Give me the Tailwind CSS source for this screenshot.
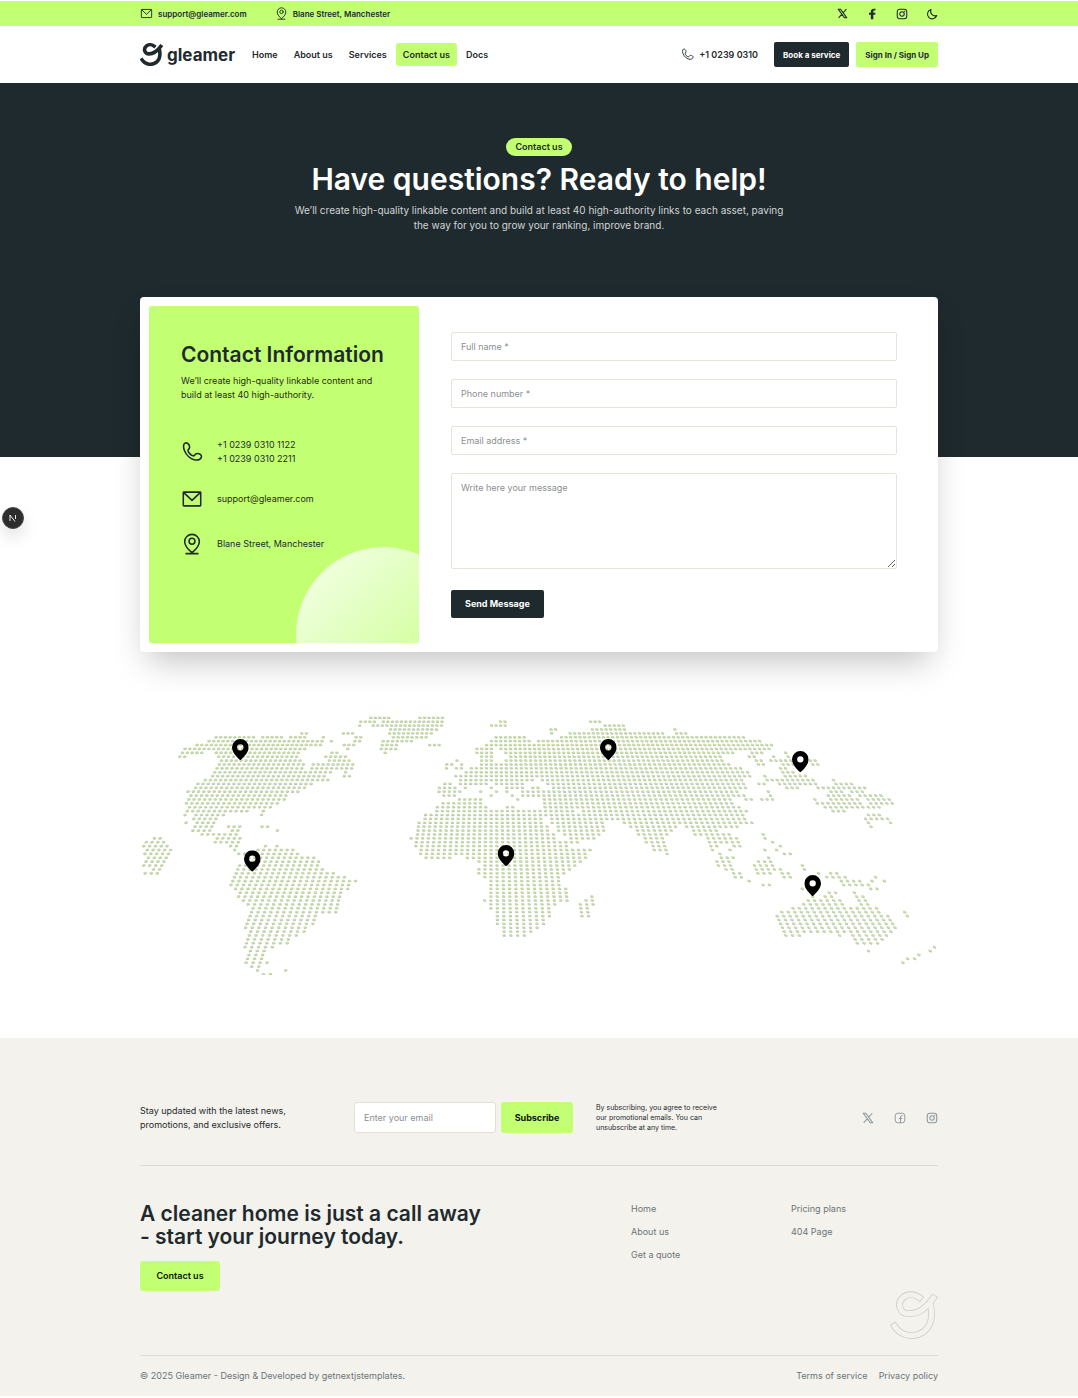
<!DOCTYPE html>
<html lang="en">
<head>
<meta charset="utf-8">
<meta name="viewport" content="width=device-width, initial-scale=1">
<title>Contact us - Gleamer</title>
<script src="https://cdn.jsdelivr.net/npm/@tailwindcss/browser@4"></script>
</head>
<body class="bg-white pt-px font-['Inter',sans-serif] text-[9px] text-[#1f2a2e] antialiased">

<svg class="hidden" aria-hidden="true">
  <symbol id="mail" viewBox="0 0 24 24"><g fill="none" stroke="currentColor" stroke-width="1.7" stroke-linejoin="round"><rect x="2.500" y="4.500" width="19" height="15" rx=".6"/><path d="M3 5l9 8.500L21 5"/></g></symbol>
  <symbol id="place" viewBox="0 0 24 24"><g fill="none" stroke="currentColor" stroke-width="1.7" stroke-linecap="round" stroke-linejoin="round"><path d="M12 21.500c-3-2.500-8-7.500-8-12A8 8 0 0 1 20 9.500c0 4.500-5 9.500-8 12zM5.500 22.500h13"/><circle cx="12" cy="9" r="3.200"/></g></symbol>
  <symbol id="phone" viewBox="0 0 24 24"><path fill="none" stroke="currentColor" stroke-width="1.7" stroke-linejoin="round" d="M3.200 3.600C3.800 2.200 5.600 1.600 7 2.400c1.700 1 2.500 3.300 2.300 4.900-.2 1.500-1.900 1.900-1.600 3.400.4 2 3.300 5.100 5.400 5.500 1.500.3 1.900-1.500 3.500-2.300 1.600-.6 4.500.2 5.400 1.700.7 1.600-.4 3.700-2 4.600-3 1.400-8 .3-11.600-3C4.300 13.700 1.800 7.200 3.200 3.600z"/></symbol>
  <symbol id="x" viewBox="0 0 24 24"><path fill="none" stroke="currentColor" stroke-width="2.200" stroke-linejoin="round" d="M2.500 2.500h5L21.500 21.500h-5zM20.500 2.500l-7.800 8.500M10.800 13.200L3.500 21.500"/></symbol>
  <symbol id="fb" viewBox="0 0 24 24"><path fill="currentColor" d="M14.600 22.500v-9h3.700l.7-4h-4.400V7.200c0-1.200.6-2 2-2h2.200V1.700C17.700 1.600 16.500 1.400 15.400 1.400c-3.300 0-5.700 1.900-5.700 5.500v2.600H6v4h3.700v9z"/></symbol>
  <symbol id="fbbox" viewBox="0 0 24 24"><g fill="none" stroke="currentColor" stroke-width="1.900"><rect x="2.500" y="2.500" width="19" height="19" rx="5"/><path d="M17 7.500h-1.500c-1.600 0-2.500.9-2.500 2.500v11.500M9.500 13h7"/></g></symbol>
  <symbol id="ig" viewBox="0 0 24 24"><g fill="none" stroke="currentColor" stroke-width="2.100"><rect x="2.500" y="2.500" width="19" height="19" rx="5"/><circle cx="12" cy="12" r="4.500"/></g><circle cx="17.300" cy="6.700" r="1.200" fill="currentColor"/></symbol>
  <symbol id="moon" viewBox="0 0 24 24"><path fill="none" stroke="currentColor" stroke-width="2.200" stroke-linejoin="round" d="M10 3a9.500 9.500 0 1 0 11.500 12A9 9 0 0 1 10 3z"/></symbol>
  <symbol id="gmark" viewBox="59 65 142 142"><g fill="none" stroke="currentColor" stroke-width="22" stroke-linecap="square" stroke-linejoin="round"><path d="M146 84C134 75 112 72 99 83C78 101 86 132 115 132C147 132 166 115 187 86"/><path d="M179 106C185 136 182 167 160 184C132 205 92 200 72 169"/></g></symbol>
  <symbol id="pin" viewBox="0 0 50 64"><path fill="#000" fill-rule="evenodd" d="M25 0A25 25 0 0 1 50 25C50 41 34 56 25 64C16 56 0 41 0 25A25 25 0 0 1 25 0zM25 15.500a9.500 9.500 0 1 0 0 19a9.500 9.500 0 1 0 0-19z"/></symbol>
</svg>

<div class="bg-[#c2ff72]">
  <div class="mx-auto flex h-[25px] max-w-[798px] items-center justify-between text-[8px] font-semibold">
    <div class="flex items-center gap-7">
      <a href="#" class="flex items-center gap-[5px]"><svg class="size-[13px]"><use href="#mail"/></svg>support@gleamer.com</a>
      <a href="#" class="flex items-center gap-[5px]"><svg class="size-[13px]"><use href="#place"/></svg>Blane Street, Manchester</a>
    </div>
    <div class="flex items-center gap-[18px]">
      <a href="#" aria-label="X"><svg class="size-[11px]"><use href="#x"/></svg></a>
      <a href="#" aria-label="Facebook"><svg class="size-3"><use href="#fb"/></svg></a>
      <a href="#" aria-label="Instagram"><svg class="size-3"><use href="#ig"/></svg></a>
      <button type="button" aria-label="Toggle dark mode"><svg class="size-3"><use href="#moon"/></svg></button>
    </div>
  </div>
</div>

<header class="mx-auto flex h-[57px] max-w-[798px] items-center justify-between">
  <div class="flex items-center">
    <a href="#" class="mr-[10px] flex items-center gap-1 text-[17px] leading-5 font-bold"><svg class="size-[23px]"><use href="#gmark"/></svg>gleamer</a>
    <nav class="flex gap-[2px] font-semibold">
      <a href="#" class="rounded-[3px] px-[7px] py-[5px] leading-[13px]">Home</a>
      <a href="#" class="rounded-[3px] px-[7px] py-[5px] leading-[13px]">About us</a>
      <a href="#" class="rounded-[3px] px-[7px] py-[5px] leading-[13px]">Services</a>
      <a href="#" class="rounded-[3px] bg-[#c2ff72] px-[7px] py-[5px] leading-[13px]">Contact us</a>
      <a href="#" class="rounded-[3px] px-[7px] py-[5px] leading-[13px]">Docs</a>
    </nav>
  </div>
  <div class="flex items-center">
    <a href="#" class="mr-4 flex items-center gap-[5px] font-semibold"><svg class="size-[13px]"><use href="#phone"/></svg>+1 0239 0310</a>
    <button type="button" class="mr-[7px] h-[25px] rounded-[2px] bg-[#1f2a2e] px-[9px] text-[8px] font-bold text-white">Book a service</button>
    <button type="button" class="h-[25px] rounded-[2px] bg-[#c2ff72] px-[9px] text-[8px] font-bold">Sign In / Sign Up</button>
  </div>
</header>

<main>
  <section class="bg-[#1f2a2e] pt-[55px] pb-[160px] text-center text-white">
    <div class="mx-auto h-[159px] max-w-[504px]">
      <span class="inline-block rounded-full bg-[#c2ff72] px-[9px] py-[3px] leading-3 font-semibold text-[#1f2a2e]">Contact us</span>
      <h1 class="mt-[5px] text-[30px] leading-9 font-semibold">Have questions? Ready to help!</h1>
      <p class="mt-[6px] text-[10px] leading-[15px] text-[#d2d4d5]">We’ll create high-quality linkable content and build at least 40 high-authority links to each asset, paving the way for you to grow your ranking, improve brand.</p>
    </div>
  </section>

  <section class="mx-auto -mt-[160px] flex max-w-[798px] rounded bg-white p-[9px] shadow-[0_16px_32px_-8px_rgba(0,0,0,0.25)]">
    <div class="relative w-[270px] shrink-0 overflow-hidden rounded-[3px] bg-[#c2ff72] px-8 pt-9">
      <h2 class="text-[21px] leading-[26px] font-semibold whitespace-nowrap">Contact Information</h2>
      <p class="mt-[6px] text-[9px] leading-[14px]">We’ll create high-quality linkable content and build at least 40 high-authority.</p>
      <ul class="mt-9">
        <li class="flex h-[28px] items-center gap-[14px]"><svg class="size-[22px]"><use href="#phone"/></svg><span class="leading-[14px]">+1 0239 0310 1122<br>+1 0239 0310 2211</span></li>
        <li class="mt-[21px] flex h-[23px] items-center gap-[14px]"><svg class="size-[22px]"><use href="#mail"/></svg>support@gleamer.com</li>
        <li class="mt-[22px] flex h-[23px] items-center gap-[14px]"><svg class="size-[22px]"><use href="#place"/></svg>Blane Street, Manchester</li>
      </ul>
      <div class="absolute -right-[52px] -bottom-[79px] size-[175px] rounded-full bg-linear-to-br from-[#f6ffea] to-[#c2ff72]"></div>
    </div>
    <form class="flex grow flex-col items-start pt-[26px] pr-8 pb-[25px] pl-8">
      <input aria-label="Full name" placeholder="Full name *" class="mb-[18px] h-[29px] w-full rounded-[2px] border border-[#e6e4da] px-[9px] placeholder:text-[#8b8f91]">
      <input aria-label="Phone number" type="tel" placeholder="Phone number *" class="mb-[18px] h-[29px] w-full rounded-[2px] border border-[#e6e4da] px-[9px] placeholder:text-[#8b8f91]">
      <input aria-label="Email address" type="email" placeholder="Email address *" class="mb-[18px] h-[29px] w-full rounded-[2px] border border-[#e6e4da] px-[9px] placeholder:text-[#8b8f91]">
      <textarea aria-label="Message" placeholder="Write here your message" class="h-24 w-full resize rounded-[2px] border border-[#e6e4da] px-[9px] py-[7px] leading-[13px] placeholder:text-[#8b8f91]"></textarea>
      <button type="submit" class="mt-[21px] h-7 rounded-[2px] bg-[#1f2a2e] px-[14px] text-[9px] font-bold text-white">Send Message</button>
    </form>
  </section>

  <section class="mx-auto mt-16 mb-[63px] max-w-[798px]">
    <svg id="map" class="block w-full" viewBox="30 48 2394 777" role="img" aria-label="World map with office locations">
      <path id="shade" fill="none" stroke="#bcc3b2" stroke-width="6" stroke-linecap="round"/>
      <path id="dots" fill="none" stroke="#c8e0a6" stroke-width="5" stroke-linecap="round"/>
      <use href="#pin" x="306" y="117" width="50" height="64"/>
      <use href="#pin" x="342" y="451" width="50" height="64"/>
      <use href="#pin" x="1410" y="117" width="50" height="64"/>
      <use href="#pin" x="1103" y="435" width="50" height="64"/>
      <use href="#pin" x="1986" y="153" width="50" height="64"/>
      <use href="#pin" x="2023" y="525" width="50" height="64"/>
    </svg>
  </section>
</main>

<footer class="bg-[#f4f2ed] pt-16">
  <div class="mx-auto max-w-[798px]">
    <div class="flex items-center border-b border-[#dcdbd7] pb-8 leading-[14px]">
      <p class="w-[214px]">Stay updated with the latest news,<br>promotions, and exclusive offers.</p>
      <form class="flex">
        <input aria-label="Email" type="email" placeholder="Enter your email" class="mr-[5px] h-[31px] w-[142px] rounded-[3px] border border-[#e6e0d2] bg-white px-[9px] placeholder:text-[#8b8f91]">
        <button type="submit" class="h-[31px] w-[72px] rounded-[3px] bg-[#c2ff72] font-bold text-[#0d1600]">Subscribe</button>
      </form>
      <p class="ml-[23px] text-[7px] leading-[10px]">By subscribing, you agree to receive<br>our promotional emails. You can<br>unsubscribe at any time.</p>
      <div class="ml-auto flex gap-5 text-[#8c979b]">
        <a href="#" aria-label="X"><svg class="size-3"><use href="#x"/></svg></a>
        <a href="#" aria-label="Facebook"><svg class="size-3"><use href="#fbbox"/></svg></a>
        <a href="#" aria-label="Instagram"><svg class="size-3"><use href="#ig"/></svg></a>
      </div>
    </div>
    <div class="flex pt-9">
      <div class="w-[491px]">
        <h2 class="text-[21px] leading-[23px] font-semibold">A cleaner home is just a call away<br>- start your journey today.</h2>
        <button type="button" class="mt-[13px] h-[30px] w-20 rounded-[3px] bg-[#c2ff72] font-semibold text-[#0d1600]">Contact us</button>
      </div>
      <ul class="w-40 space-y-[9px] leading-[14px] text-[#6c7476]">
        <li><a href="#">Home</a></li><li><a href="#">About us</a></li><li><a href="#">Get a quote</a></li>
      </ul>
      <ul class="space-y-[9px] leading-[14px] text-[#6c7476]">
        <li><a href="#">Pricing plans</a></li><li><a href="#">404 Page</a></li>
      </ul>
    </div>
    <div class="flex justify-end border-b border-[#dcdbd7] pb-4">
      <svg class="size-12" viewBox="59 65 142 142" fill="none" stroke-linecap="square" stroke-linejoin="round" aria-hidden="true">
        <g stroke="#cfcfcb" stroke-width="20"><path d="M146 84C134 75 112 72 99 83C78 101 86 132 115 132C147 132 166 115 187 86"/><path d="M179 106C185 136 182 167 160 184C132 205 92 200 72 169"/></g>
        <g stroke="#f4f2ed" stroke-width="15"><path d="M146 84C134 75 112 72 99 83C78 101 86 132 115 132C147 132 166 115 187 86"/><path d="M179 106C185 136 182 167 160 184C132 205 92 200 72 169"/></g>
      </svg>
    </div>
    <div class="flex h-10 items-center justify-between text-[#6c7476]">
      <p>© 2025 Gleamer - Design &amp; Developed by getnextjstemplates.</p>
      <div class="flex gap-[11px]"><a href="#">Terms of service</a><a href="#">Privacy policy</a></div>
    </div>
  </div>
</footer>

<button type="button" aria-label="Open dev tools" class="fixed top-[507px] left-[2px] flex size-[22px] items-center justify-center rounded-full border border-[#4a4a4a] bg-[#2c2c2c] text-white shadow-[0_8px_16px_rgba(0,0,0,0.12)]">
  <svg class="size-[10px]" viewBox="0 0 20 20" fill="none" stroke="currentColor" stroke-width="1.800"><path d="M4 16V4l10 13M15 4v8"/></svg>
</button>

<script>
// Land spans per latitude row; a single number is a lone dot. Columns fan out from a central meridian.
const rows = `727-780 872-939
695-740 763-939 1113-1126 1378-1404
693 733-936 1083-1126 1430-1478
785-925 1260-1275 1395-1478 1640
510-524 645-675 785-908 1262 1317-1330 1355-1595 1645-1675
255-370 393-450 490-532 587 685-698 785-892 1097-1183 1290-1305 1330-1845
235-576 611 680-695 765-850 1085-1195 1222-1892
198-567 650-678 762-800 902-932 1070-1110 1127-1925
163-523 660 758-800 1042-1087 1113-1920
153-215 255-505 614-628 770 1042-1085 1125-1813 1870-1900 1970
147-162 275-500 595-652 1055-1085 1143-1768 1862-1880 1925 1975
270-505 605-655 983 1053-1085 1127-1770 1882-1900 1930-1990 2045-2060
263-518 555-675 953-966 995 1055-1803 1890-1905 1955-1990 2045-2065
257-510 553-670 950 980-995 1023-1040 1055-1837 1958-1975
250-600 652 1007-1860 1962-1995
245-590 650-665 978-1865 1913 1965-2022
222-600 993-1195 1205 1235-1842 1918-2048 2110
203-540 945-965 990-1040 1055-1072 1097-1180 1250-1845 1890-1908 1945-2065 2117-2172
198-518 932-978 1005 1083 1132-1175 1205-1222 1265-1840 1968-2005 2072-2200
173-500 930-990 1053 1100 1130 1178-1828 1918 2097-2130 2160-2205
183-465 945-975 1083 1147 1178-1225 1240-1848 1925 2100-2160 2185-2205 2225-2260
173-460 990-1054 1162 1242-1803 1852-1868 1900-1932 2052 2107-2180 2220-2285
168-440 942-1054 1242-1812 2060 2085-2190 2218-2290
178-417 925-1070 1130-1150 1245-1835 2085-2195 2223-2245
170-350 397 925-1232 1245-1325 1355-1850 2110-2150
163 192-280 392 890-1230 1245-1340 1360-1845 2223-2245
190-257 885-1232 1260-1345 1370-1850 2215-2275
167 195-255 872-1240 1265-1350 1360-1415 1490-1850 1875 2222 2275
195-250 305-323 393-410 868-1252 1285-1415 1510-1630 1675-1815 2232
185-245 303-320 437 868-1255 1280-1415 1517-1620 1700-1765
213-305 325 867-1270 1300-1405 1535-1610 1700-1795 1905
70-100 258-328 847 867-1270 1317-1390 1545-1600 1740-1820 1910
45-108 265-325 865-1345 1550-1600 1745-1820 1932
50-118 300-325 400 437 863-1310 1570-1600 1750-1765 1815-1838 1955
45-125 312 378-485 872-1310 1335-1380 1580-1605 1755 1808 1910 1947
42-120 323-340 380-500 875-995 1015-1365 1620 1775 1970-1985
50-117 350-547 890-960 1015-1365 1780-1803 1920
50-98 350-560 1050-1350 1770-1805 1892-1930
35 65-90 325-560 1067-1335 1775-1810 1880-1930 2020
63-98 320-573 1050-1320 1797-1815 1885-1960 2025
38 73-90 315-605 1050-1303 1818-1835 1890-1930 1960-1980 2070 2105-2125
308-650 1067-1285 1825-1842 1967-1985 2090-2140 2238
303-670 1085-1288 1865 2135-2195 2223 2260
313-665 1085-1290 1905-1923 2140-2220
310-663 1085-1308 2020 2225-2245
323-640 1085-1308 2103-2120 2177
322-623 1085-1308 1383 2052 2090-2110 2185-2203
335-620 1067-1308 1365-1385 2035-2130 2190-2210
365-618 1085-1275 1348-1387 2027-2140 2195-2220
365-615 1085-1262 1350-1370 1995-2245
358-610 1103-1260 1350-1370 1960-2255 2318
353-550 1103-1258 1353-1373 1947-2280 2338
348-548 1103-1245 1953-2290
345-545 1103-1245 1958-2298
343-522 1123-1225 1964-2303
355-515 1123-1205 1969-2278
355-492 1123-1185 1974-2015 2133 2172-2275
347-470 2178-2262
345-468 2185-2245
340-420 2412
357-400 2218 2403
352-397 2373
347-392 2342-2360
343 363-405 2312-2330
362-382
378 460
394-415`.split("\n");
const center = 1090, phase = 0.68;
let light = "", dark = "";
rows.forEach((row, i) => {
  const step = 13.4 + 0.12 * i, y = 53 + 11.66 * i;
  row.trim().split(" ").forEach(span => {
    const [a, b] = span.split("-").map(Number);
    const first = Math.round((a - center) / step - phase);
    const last = b ? Math.round((b - center) / step - phase) : first;
    for (let k = first; k <= last; k++) {
      const x = center + (k + phase) * step, tilt = (x - center) / 1400;
      light += `M${(x - 4).toFixed(1)} ${(y - 1 - tilt).toFixed(1)}l4 ${(tilt * 2).toFixed(1)}`;
      dark += `M${(x - 3).toFixed(1)} ${(y + 1 - tilt).toFixed(1)}l4 ${(tilt * 2).toFixed(1)}`;
    }
  });
});
document.getElementById("shade").setAttribute("d", dark);
document.getElementById("dots").setAttribute("d", light);
</script>
</body>
</html>
